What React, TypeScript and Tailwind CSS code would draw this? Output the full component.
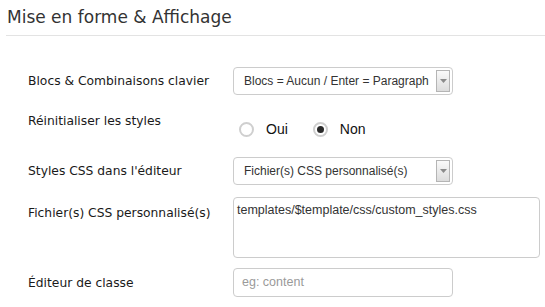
const SelectBox = ({ value }: { value: string }) => {
  return (
    <div className="flex items-center w-[220px] h-[28px] rounded-[4px] border border-[#cccccc] bg-white pl-[10px] pr-[2px]">
      <span className="flex-1 truncate font-['Liberation_Sans',Arial,sans-serif] text-[12px] text-[#333333]">
        {value}
      </span>
      {/* Arrow box */}
      <div className="flex items-center justify-center w-[14px] h-[22px] border border-[#b5b5b5] bg-gradient-to-b from-[#fafafa] to-[#dcdcdc]">
        <svg width="7" height="4" viewBox="0 0 7 4">
          <path d="M0 0 L7 0 L3.5 4 Z" fill="#8a8a8a" />
        </svg>
      </div>
    </div>
  );
};

const Radio = ({ checked, label }: { checked?: boolean; label: string }) => {
  return (
    <div className="flex items-center gap-[12px]">
      <span className="flex items-center justify-center w-[15px] h-[15px] rounded-full border-2 border-[#cfcfcf] bg-white">
        {checked && <span className="w-[7px] h-[7px] rounded-full bg-[#2a2a2a]" />}
      </span>
      <span className="font-['Liberation_Sans',Arial,sans-serif] text-[14px] text-[#111111]">{label}</span>
    </div>
  );
};

const Label = ({ children }: { children: string }) => {
  return (
    <div className="w-[233px] shrink-0 pl-[28px] pr-[4px] font-['DejaVu_Sans',Verdana,sans-serif] text-[12.3px] leading-[20px] text-[#1a1a1a] whitespace-nowrap">
      {children}
    </div>
  );
};

export default function App() {
  return (
    <div className="w-[545px] h-[307px] bg-white overflow-hidden">
      {/* Header */}
      <div className="pl-[7px] pt-[5px]">
        <h2 className="font-['DejaVu_Sans',Verdana,sans-serif] text-[17px] leading-[24px] text-[#333333]">
          Mise en forme &amp; Affichage
        </h2>
      </div>
      <div className="ml-[6px] mt-[6px] border-t border-[#e3e3e3]" />

      {/* Blocs */}
      <div className="flex items-center mt-[31px]">
        <Label>Blocs &amp; Combinaisons clavier</Label>
        <SelectBox value="Blocs = Aucun / Enter = Paragraph" />
      </div>

      {/* Reset styles */}
      <div className="flex items-start mt-[10px] h-[42px]">
        <div className="shrink-0 pt-[6px]">
          <Label>Réinitialiser les styles</Label>
        </div>
        <div className="flex items-center gap-[25px] pt-[14px] pl-[6px]">
          <Radio label="Oui" />
          <Radio label="Non" checked />
        </div>
      </div>

      {/* Styles CSS */}
      <div className="flex items-center mt-[10px]">
        <Label>Styles CSS dans l'éditeur</Label>
        <SelectBox value="Fichier(s) CSS personnalisé(s)" />
      </div>

      {/* Custom CSS files */}
      <div className="flex items-start mt-[12px]">
        <div className="shrink-0 pt-[6px]">
          <Label>Fichier(s) CSS personnalisé(s)</Label>
        </div>
        <div className="w-[307px] shrink-0 h-[61px] rounded-[4px] border border-[#cccccc] bg-white px-[3px] pt-[4px] font-['Liberation_Sans',Arial,sans-serif] text-[12.5px] leading-[16px] text-[#333333]">
          templates/$template/css/custom_styles.css
        </div>
      </div>

      {/* Class editor */}
      <div className="flex items-center mt-[10px]">
        <Label>Éditeur de classe</Label>
        <div className="flex items-center w-[220px] h-[29px] rounded-[4px] border border-[#cccccc] bg-white pl-[8px] font-['Liberation_Sans',Arial,sans-serif] text-[12.5px] text-[#9a9a9a]">
          eg: content
        </div>
      </div>
    </div>
  );
}
